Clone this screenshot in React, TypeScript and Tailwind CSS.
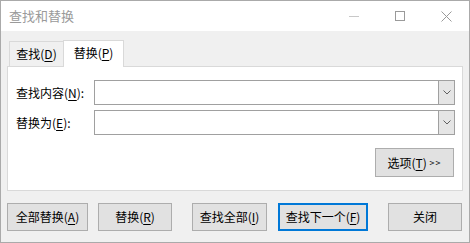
import React from "react";

const U = ({ c }: { c: string }) => <span className="underline underline-offset-2">{c}</span>;

const Btn = ({
  children,
  className = "",
  focused = false,
}: {
  children: React.ReactNode;
  className?: string;
  focused?: boolean;
}) => (
  <button
    className={`h-[28px] shrink-0 flex items-center justify-center bg-[#e1e1e1] text-[12px] text-black ${
      focused ? "border-2 border-[#0078d7]" : "border border-[#adadad]"
    } ${className}`}
  >
    {children}
  </button>
);

const Combo = () => (
  <div className="flex-1 h-[25px] flex bg-white border border-[#a0a0a0]">
    <div className="flex-1" />
    <div className="w-[16px] h-full bg-[#e5e5e5] border-l border-[#a0a0a0] flex items-center justify-center">
      <svg width="8" height="5" viewBox="0 0 8 5">
        <path d="M0.5 0.5 L4 4 L7.5 0.5" fill="none" stroke="#606060" strokeWidth="1" />
      </svg>
    </div>
  </div>
);

export default function App() {
  return (
    <div
      className="w-[470px] h-[243px] bg-[#f0f0f0] border border-[#aaaaaa] flex flex-col overflow-hidden"
      style={{ fontFamily: '"Segoe UI", "Noto Sans CJK SC", sans-serif' }}
    >
      {/* title bar */}
      <div className="h-[30px] bg-white flex items-center shrink-0">
        <span className="pl-[8px] text-[13px] text-[#9a9a9a]">查找和替换</span>
        <div className="ml-auto flex items-center h-full">
          <div className="w-[46px] h-full flex items-center justify-center">
            <div className="w-[10px] h-px bg-[#c8c8c8]" />
          </div>
          <div className="w-[46px] h-full flex items-center justify-center">
            <div className="w-[10px] h-[10px] border border-[#9a9a9a]" />
          </div>
          <div className="w-[46px] h-full flex items-center justify-center">
            <svg width="11" height="11" viewBox="0 0 11 11">
              <path d="M0.5 0.5 L10.5 10.5 M10.5 0.5 L0.5 10.5" stroke="#9a9a9a" strokeWidth="1" />
            </svg>
          </div>
        </div>
      </div>

      <div className="px-[6px] pt-[9px] flex flex-col">
        {/* tabs */}
        <div className="flex items-end h-[27px] pl-[2px] relative z-10 -mb-px">
          <div className="w-[55px] h-[25px] flex items-center justify-center border border-b-0 border-[#d9d9d9] bg-[#f0f0f0] text-[12px] mb-px">
            查找(<U c="D" />)
          </div>
          <div className="w-[61px] h-[27px] -ml-px flex items-center justify-center border border-b-0 border-[#d9d9d9] bg-white text-[12px] pb-[2px]">
            替换(<U c="P" />)
          </div>
        </div>

        {/* panel */}
        <div className="h-[125px] bg-white border border-[#d9d9d9] pl-[8px] pr-[7px] pt-[13px] flex flex-col">
          <div className="flex items-center">
            <div className="w-[78px] text-[12px]">
              查找内容(<U c="N" />):
            </div>
            <Combo />
          </div>
          <div className="flex items-center mt-[5px]">
            <div className="w-[78px] text-[12px]">
              替换为(<U c="E" />):
            </div>
            <Combo />
          </div>
          <div className="flex justify-end mt-[13px] pr-px">
            <Btn className="w-[79px] h-[29px]">
              选项(<U c="T" />)&nbsp;<span className="text-[9px] tracking-[1px]">&gt;&gt;</span>
            </Btn>
          </div>
        </div>

        {/* bottom buttons */}
        <div className="flex mt-[12px]">
          <Btn className="w-[81px]">
            全部替换(<U c="A" />)
          </Btn>
          <Btn className="w-[74px] ml-[10px]">
            替换(<U c="R" />)
          </Btn>
          <Btn className="w-[75px] ml-[20px]">
            查找全部(<U c="I" />)
          </Btn>
          <Btn className="w-[90px] ml-[11px]" focused>
            查找下一个(<U c="F" />)
          </Btn>
          <Btn className="w-[74px] ml-[20px]">关闭</Btn>
        </div>
      </div>
    </div>
  );
}
